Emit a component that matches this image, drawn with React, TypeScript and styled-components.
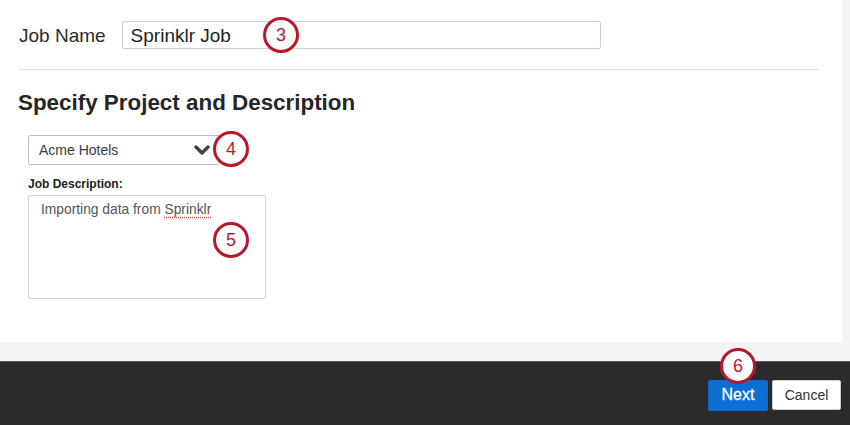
import React from 'react';
import styled, { createGlobalStyle } from 'styled-components';

const GlobalStyle = createGlobalStyle`
  html, body {
    margin: 0;
    padding: 0;
    background: #f4f4f6;
  }
  body {
    font-family: "Liberation Sans", Arial, Helvetica, sans-serif;
    color: #2b2b2b;
  }
`;

const Page = styled.div`
  position: relative;
  width: 850px;
  height: 425px;
  display: flex;
  flex-direction: column;
  background: #f4f4f6;
  overflow: hidden;
`;

const Panel = styled.section`
  width: 842px;
  height: 342px;
  box-sizing: border-box;
  background: #ffffff;
  padding: 21px 0 0 18px;
  margin-bottom: 19px;
`;

const Row = styled.div`
  display: flex;
  align-items: center;
  gap: 16px;
`;

const FieldLabel = styled.label`
  font-size: 19px;
  color: #2b2b2b;
  padding: 2px 0 0 1px;
`;

const TextInput = styled.div`
  width: 479px;
  height: 28px;
  box-sizing: border-box;
  border: 1px solid #cfcfcf;
  border-radius: 2px;
  padding: 2px 8px 0;
  display: flex;
  align-items: center;
  font-size: 19px;
  color: #222;
`;

const Divider = styled.hr`
  margin: 20px 0 0 0;
  width: 801px;
  height: 1px;
  border: none;
  background: #dcdcdc;
`;

const Heading = styled.h2`
  margin: 20px 0 0 0;
  font-size: 22.4px;
  line-height: 26px;
  font-weight: bold;
  color: #262626;
`;

const Block = styled.div`
  padding-left: 10px;
`;

const Select = styled.div`
  margin-top: 19px;
  width: 192px;
  height: 30px;
  box-sizing: border-box;
  border: 1px solid #b9bec3;
  border-radius: 2px;
  padding: 0 9px 0 10px;
  display: flex;
  align-items: center;
  justify-content: space-between;
  font-size: 14px;
  color: #3b3b3b;
`;

const SmallLabel = styled.div`
  margin-top: 12px;
  font-size: 12px;
  line-height: 14px;
  font-weight: bold;
  color: #222;
`;

const TextArea = styled.div`
  margin-top: 4px;
  width: 238px;
  height: 104px;
  box-sizing: border-box;
  border: 1px solid #d2d2d2;
  border-radius: 2px;
  padding: 5px 12px;
  font-size: 13.8px;
  line-height: 17px;
  color: #555;
`;

const Misspelled = styled.span`
  text-decoration: underline dotted #e0505a;
  text-underline-offset: 3px;
`;

const Footer = styled.footer`
  flex: 1;
  background: #2b2b2b;
  border-top: 1px solid #5a5a5a;
  display: flex;
  align-items: center;
  justify-content: flex-end;
  gap: 4px;
  padding: 3px 9px 0 0;
`;

const Button = styled.button<{ $primary?: boolean }>`
  height: ${(p) => (p.$primary ? '31px' : '30px')};
  width: ${(p) => (p.$primary ? '60px' : '69px')};
  padding: 0;
  border-radius: 2px;
  border: 1px solid ${(p) => (p.$primary ? '#0b6cd0' : '#cfcfcf')};
  background: ${(p) => (p.$primary ? '#0c6fd4' : '#ffffff')};
  color: ${(p) => (p.$primary ? '#ffffff' : '#333333')};
  font-family: "Liberation Sans", Arial, sans-serif;
  font-size: ${(p) => (p.$primary ? '16px' : '14px')};
  font-weight: 400;
  -webkit-text-stroke: ${(p) => (p.$primary ? '0.3px #ffffff' : '0')};
`;

const Callout = styled.div<{ $x: number; $y: number }>`
  position: absolute;
  left: ${(p) => p.$x - 18}px;
  top: ${(p) => p.$y - 18}px;
  width: 36px;
  height: 36px;
  box-sizing: border-box;
  border: 3px solid #b8172c;
  border-radius: 50%;
  background: #ffffff;
  display: flex;
  align-items: center;
  justify-content: center;
  font-size: 18px;
  color: #b8172c;
`;

const Chevron = () => (
  <svg width="16" height="11" viewBox="0 0 16 11">
    <polyline
      points="2,2 8,8 14,2"
      fill="none"
      stroke="#35434e"
      strokeWidth="3.4"
      strokeLinecap="round"
      strokeLinejoin="round"
    />
  </svg>
);

export default function App() {
  return (
    <Page>
      <GlobalStyle />
      <Panel>
        <Row>
          <FieldLabel>Job Name</FieldLabel>
          <TextInput>Sprinklr Job</TextInput>
        </Row>
        <Divider />
        <Heading>Specify Project and Description</Heading>
        <Block>
          <Select>
            <span>Acme Hotels</span>
            <Chevron />
          </Select>
          <SmallLabel>Job Description:</SmallLabel>
          <TextArea>
            Importing data from <Misspelled>Sprinklr</Misspelled>
          </TextArea>
        </Block>
      </Panel>
      <Footer>
        <Button $primary>Next</Button>
        <Button>Cancel</Button>
      </Footer>
      <Callout $x={281} $y={35}>3</Callout>
      <Callout $x={231} $y={149}>4</Callout>
      <Callout $x={231} $y={240}>5</Callout>
      <Callout $x={738} $y={366}>6</Callout>
    </Page>
  );
}
